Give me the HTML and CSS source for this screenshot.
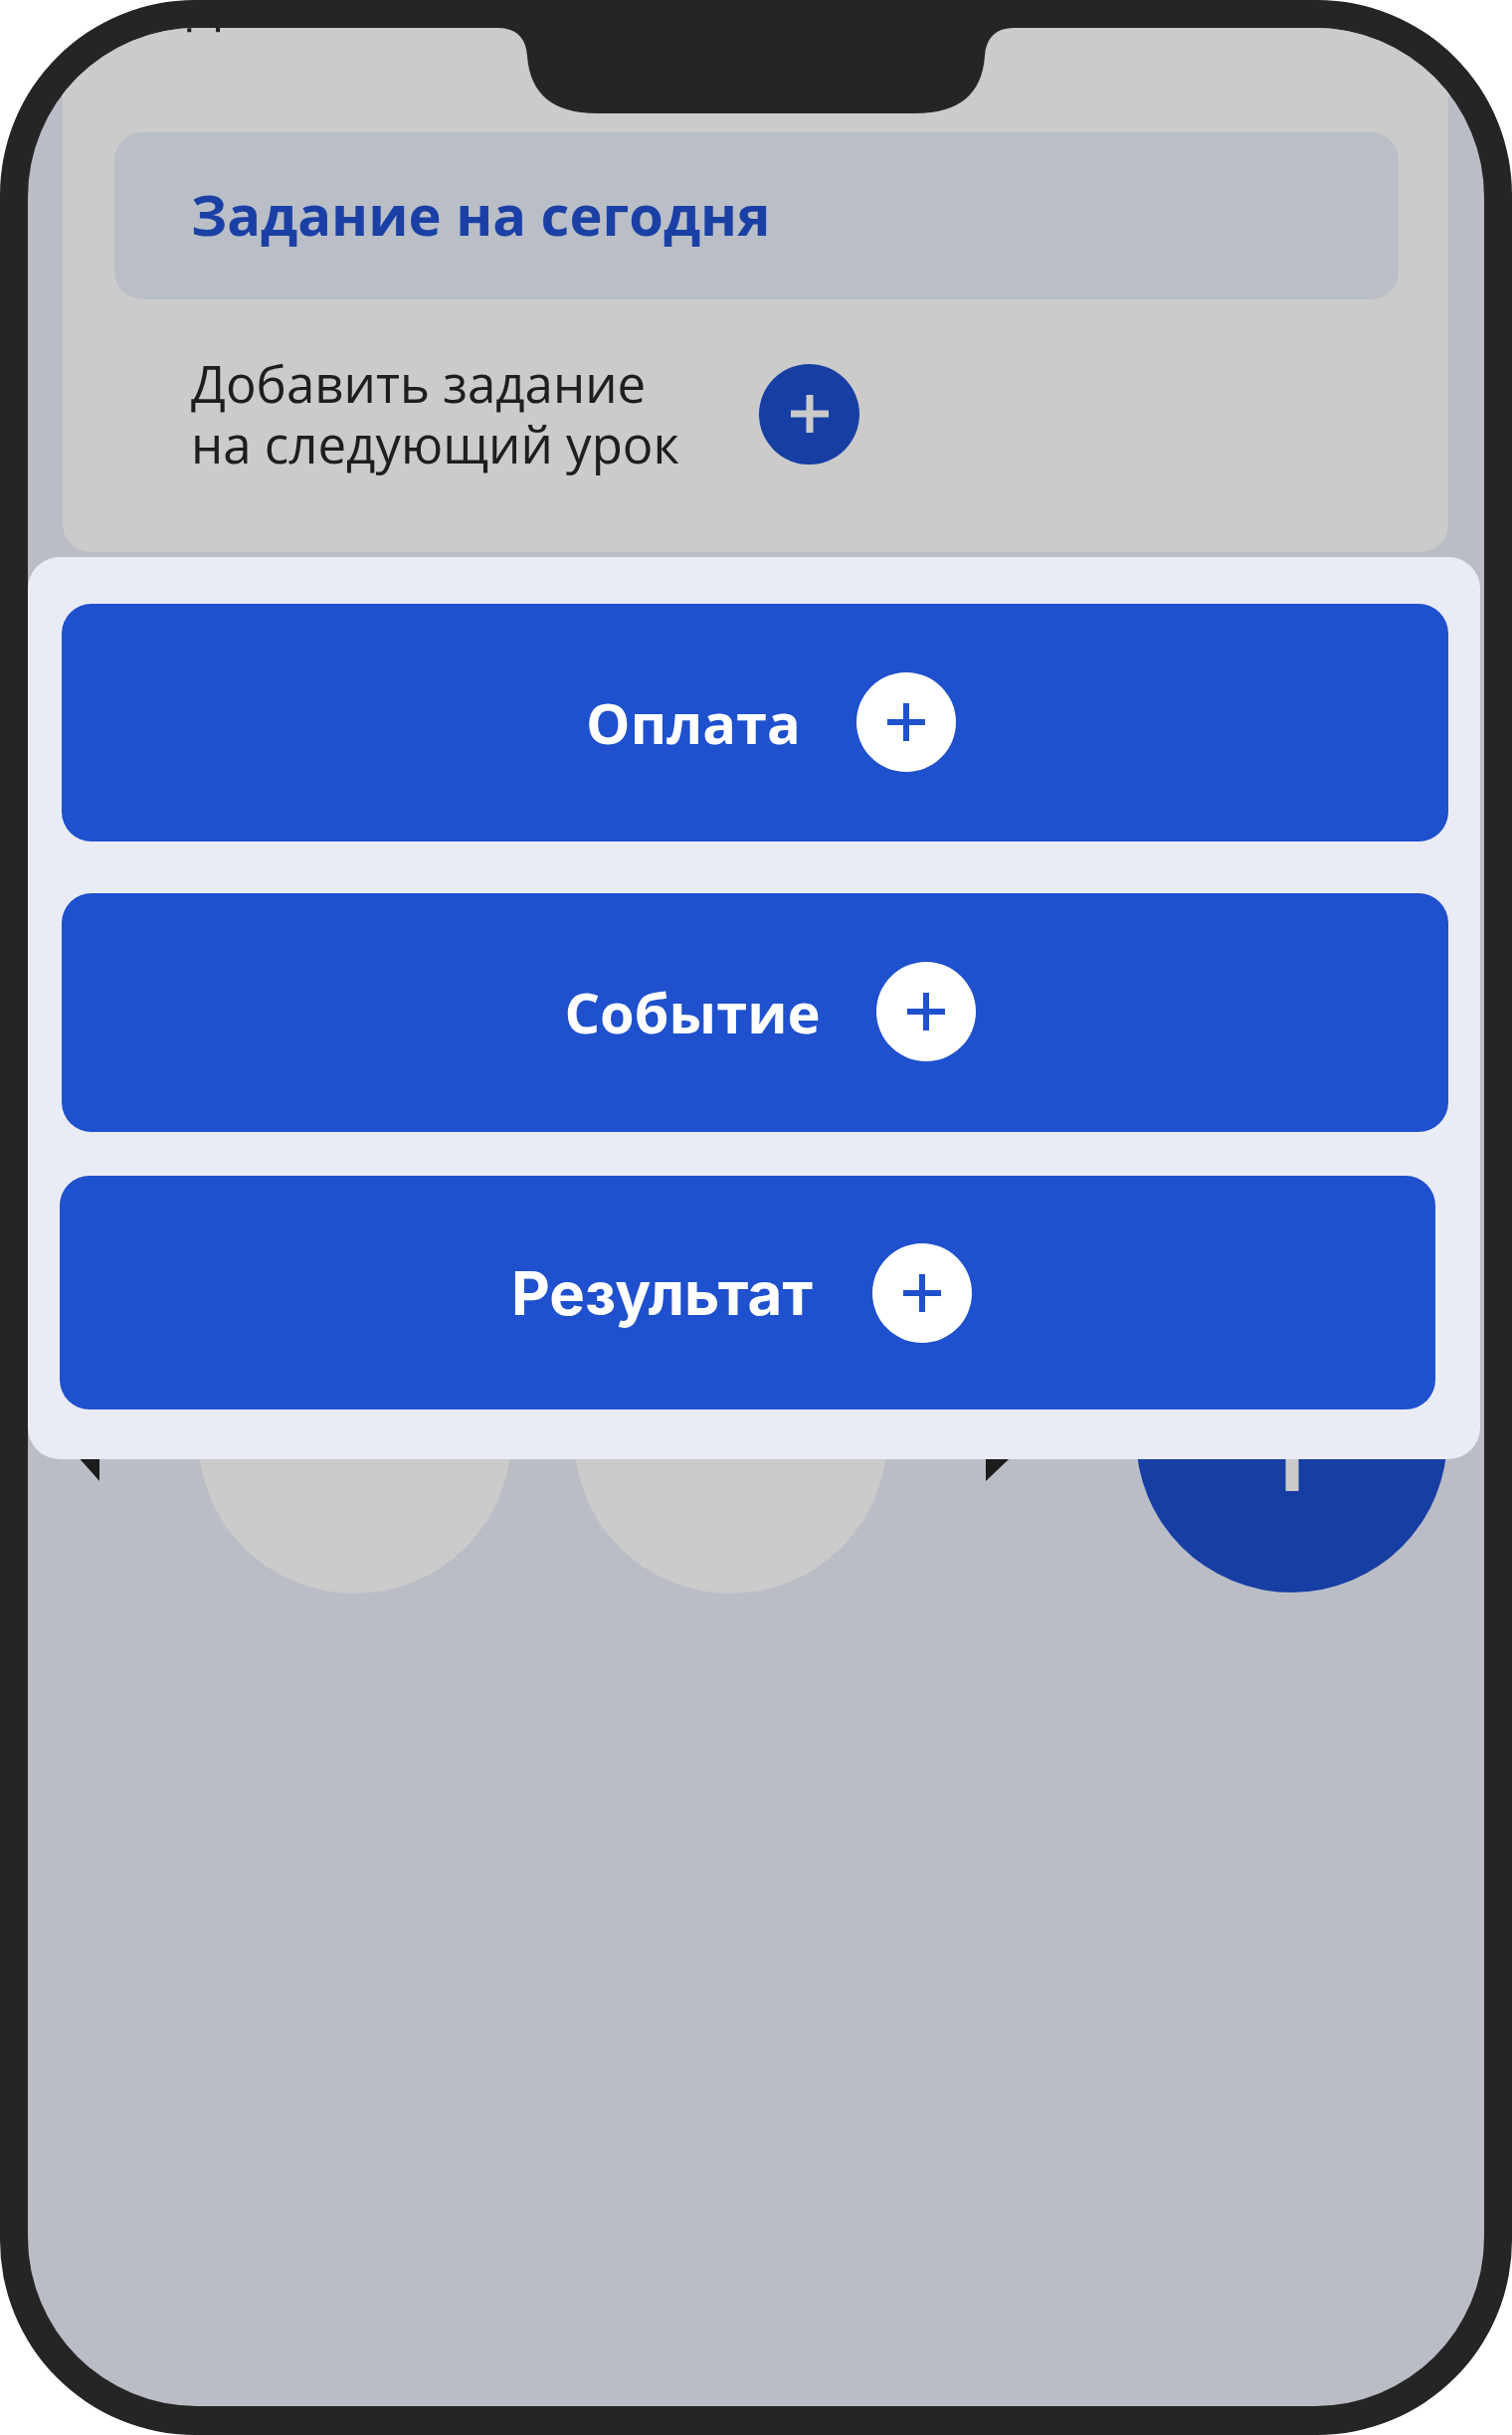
FILE: index.html
```html
<!DOCTYPE html>
<html lang="ru">
<head>
<meta charset="utf-8">
<title>Добавить</title>
<link rel="stylesheet" href="styles.css">
</head>
<body>
<div class="phone">
  <div class="screen">
    <div class="top-band"><div class="top-title">Дневник</div></div>
    <section class="card">
      <div class="task-head"><h2 class="task-title">Задание на сегодня</h2></div>
      <div class="add-row">
        <p class="add-text"><span class="add-line">Добавить задание</span><span class="add-line">на следующий урок</span></p>
        <span class="add-btn">
          <svg width="40" height="40" viewBox="0 0 40 40"><rect x="1" y="16.5" width="38" height="7" fill="#cbcbcb"/><rect x="16.5" y="1" width="7" height="38" fill="#cbcbcb"/></svg>
        </span>
      </div>
    </section>
    <div class="days">
      <span class="arrow arrow-left"></span>
      <span class="day"></span>
      <span class="day day-second"></span>
      <span class="arrow arrow-right"></span>
      <span class="fab">
        <svg width="110" height="110" viewBox="0 0 110 110"><rect x="1" y="48.5" width="108" height="13" fill="#cbcbcb"/><rect x="48.5" y="1" width="13" height="108" fill="#cbcbcb"/></svg>
      </span>
    </div>
    <div class="sheet">
      <div class="action action-pay">
        <span class="action-label">Оплата</span>
        <span class="plus"><svg width="40" height="40" viewBox="0 0 40 40"><rect x="1" y="17" width="38" height="6" fill="#1f50cd"/><rect x="17" y="1" width="6" height="38" fill="#1f50cd"/></svg></span>
      </div>
      <div class="action action-event">
        <span class="action-label">Событие</span>
        <span class="plus"><svg width="40" height="40" viewBox="0 0 40 40"><rect x="1" y="17" width="38" height="6" fill="#1f50cd"/><rect x="17" y="1" width="6" height="38" fill="#1f50cd"/></svg></span>
      </div>
      <div class="action action-result">
        <span class="action-label action-label-alt">Результат</span>
        <span class="plus"><svg width="40" height="40" viewBox="0 0 40 40"><rect x="1" y="17" width="38" height="6" fill="#1f50cd"/><rect x="17" y="1" width="6" height="38" fill="#1f50cd"/></svg></span>
      </div>
    </div>
  </div>
  <svg class="notch" width="1520" height="120" viewBox="0 0 1520 120">
    <path d="M470 0 L470 28 L500 28 Q528 28 530 56 Q534 114 600 114 L920 114 Q986 114 990 56 Q992 28 1020 28 L1050 28 L1050 0 Z" fill="#252525"/>
  </svg>
</div>
</body>
</html>
```

FILE: styles.css
```css
* { box-sizing: border-box; }

html, body {
  margin: 0;
  padding: 0;
  background: #ffffff;
}

body {
  font-family: "Open Sans", "Noto Sans", sans-serif;
}

.phone {
  position: relative;
  width: 1520px;
  height: 2448px;
  padding: 28px 28px 29px 28px;
  background: #252525;
  border-radius: 196px;
}

.screen {
  position: relative;
  width: 100%;
  height: 100%;
  overflow: hidden;
  border-radius: 170px;
  background: #babdc6;
}

.top-band {
  display: flow-root;
  height: 69px;
  background: #cbcbcb;
}

.top-title {
  margin-top: -54px;
  padding-left: 160px;
  font-size: 50px;
  line-height: 60px;
  color: #1e1e1e;
}

.card {
  margin: 0 36px 0 35px;
  padding: 36px 50px 78px 52px;
  background: #cbcbcb;
  border-radius: 0 0 28px 28px;
}

.task-head {
  display: flex;
  align-items: center;
  height: 168px;
  padding-left: 77px;
  padding-bottom: 5px;
  background: #babec6;
  border-radius: 28px;
}

.task-title {
  margin: 0;
  font-size: 56px;
  font-weight: 700;
  line-height: 66px;
  color: #1a40a6;
}

.add-row {
  display: flex;
  align-items: center;
  gap: 83px;
  margin-top: 54px;
  padding-left: 77px;
}

.add-text {
  display: flex;
  flex-direction: column;
  width: 488px;
  margin: 0;
  font-size: 51px;
  line-height: 61px;
  color: #1e1e1e;
  white-space: nowrap;
}

.add-line {
  display: block;
}

.add-btn {
  display: flex;
  align-items: center;
  justify-content: center;
  width: 101px;
  height: 101px;
  border-radius: 50%;
  background: #173ea3;
}

.days {
  display: flex;
  align-items: center;
  height: 315px;
  margin-top: 732px;
  padding-left: 33px;
}

.arrow {
  width: 0;
  height: 0;
  border-top: 44px solid transparent;
  border-bottom: 44px solid transparent;
}

.arrow-left {
  border-right: 39px solid #1c1c1c;
  margin-right: 99px;
}

.arrow-right {
  border-left: 46px solid #1c1c1c;
  margin-left: 99px;
  margin-right: 105px;
}

.day {
  width: 315px;
  height: 315px;
  border-radius: 50%;
  background: #cbcbcb;
}

.day-second {
  margin-left: 63px;
}

.fab {
  display: flex;
  align-items: center;
  justify-content: center;
  width: 313px;
  height: 313px;
  border-radius: 50%;
  background: #173ea3;
}

.sheet {
  position: absolute;
  left: 0;
  top: 532px;
  width: 1460px;
  display: flex;
  flex-direction: column;
  padding: 47px 32px 50px 34px;
  background: #e9ecf5;
  border-radius: 32px;
}

.action {
  display: flex;
  align-items: center;
  justify-content: center;
  gap: 56px;
  height: 239px;
  background: #1f50cd;
  border-radius: 30px;
  color: #ffffff;
}

.action-pay {
  padding-left: 32px;
  padding-bottom: 2px;
}

.action-event {
  height: 240px;
  margin-top: 52px;
  padding-left: 30px;
  padding-bottom: 2px;
}

.action-result {
  height: 235px;
  margin-top: 44px;
  margin-left: -2px;
  margin-right: 13px;
  gap: 60px;
  padding-right: 12px;
}

.action-label {
  font-family: "Open Sans", "Noto Sans", sans-serif;
  font-size: 56px;
  font-weight: 700;
  line-height: 66px;
}

.action-label-alt {
  font-family: Inter, "Noto Sans", sans-serif;
  font-size: 60px;
  font-weight: 700;
}

.plus {
  display: flex;
  align-items: center;
  justify-content: center;
  width: 100px;
  height: 100px;
  border-radius: 50%;
  background: #ffffff;
}

.notch {
  position: absolute;
  left: 0;
  top: 0;
}
```
